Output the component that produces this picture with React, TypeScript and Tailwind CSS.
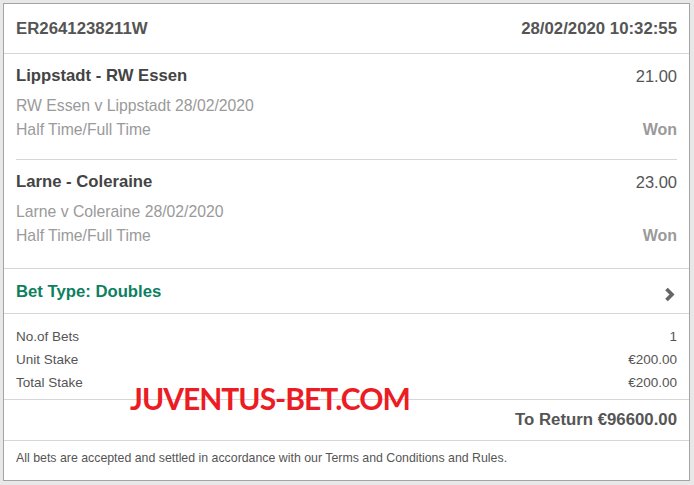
const legs = [
  { title: "Lippstadt - RW Essen", odds: "21.00", event: "RW Essen v Lippstadt 28/02/2020", market: "Half Time/Full Time", result: "Won" },
  { title: "Larne - Coleraine", odds: "23.00", event: "Larne v Coleraine 28/02/2020", market: "Half Time/Full Time", result: "Won" },
];

const summary = [
  ["No.of Bets", "1"],
  ["Unit Stake", "€200.00"],
  ["Total Stake", "€200.00"],
];

function Chevron() {
  return (
    <svg width="12" height="15" viewBox="0 0 12 15" className="mr-[1px] mt-[5px]">
      <polyline points="2.5,2 8,7.5 2.5,13" fill="none" stroke="#666" strokeWidth="3.6" strokeLinejoin="miter" />
    </svg>
  );
}

export default function App() {
  return (
    <div className="min-h-screen bg-[#e8e8e8] p-[3px] font-['Liberation_Sans',Arial,sans-serif]">
      <div className="relative w-[687px] h-[478px] border border-[#a4a4a4] bg-white">
        {/* header */}
        <div className="flex h-[50px] items-center justify-between border-b border-[#d6d6d6] px-3 text-[16.8px] font-bold leading-5 text-[#555]">
          <span>ER2641238211W</span>
          <span>28/02/2020 10:32:55</span>
        </div>

        {/* legs */}
        <div className="border-b border-[#d6d6d6] px-3">
          {legs.map((leg, i) => (
            <div
              key={leg.title}
              className={i === 0 ? "border-b border-[#d6d6d6] pt-3 pb-[17px]" : "pt-3 pb-5"}
            >
              <div className="flex justify-between leading-5">
                <span className="text-[16.7px] font-bold text-[#444]">{leg.title}</span>
                <span className="text-[16.5px] text-[#555]">{leg.odds}</span>
              </div>
              <div className="mt-2 text-[15.75px] leading-6 text-[#9a9a9a]">{leg.event}</div>
              <div className="flex justify-between text-[15.75px] leading-6 text-[#9a9a9a]">
                <span>{leg.market}</span>
                <span className="text-[16px] font-bold">{leg.result}</span>
              </div>
            </div>
          ))}
        </div>

        {/* bet type */}
        <div className="flex h-[45px] items-center justify-between border-b border-[#d6d6d6] px-3 pt-[2px]">
          <span className="text-[16.7px] font-bold leading-5 text-[#0e7f5f]">Bet Type: Doubles</span>
          <Chevron />
        </div>

        {/* stakes */}
        <div className="border-b border-[#d6d6d6] px-3 pt-[11px] pb-[5px] text-[13.5px] leading-[23px] text-[#555]">
          {summary.map(([label, value]) => (
            <div key={label} className="flex justify-between">
              <span>{label}</span>
              <span>{value}</span>
            </div>
          ))}
        </div>

        <div className="flex h-[41px] items-center justify-end border-b border-[#d6d6d6] px-3 text-[16.8px] font-bold leading-5 text-[#555]">
          To Return €96600.00
        </div>

        <div className="px-3 pt-[9px] text-[12.35px] leading-4 text-[#555]">
          All bets are accepted and settled in accordance with our Terms and Conditions and Rules.
        </div>

        {/* watermark */}
        <div className="absolute left-[126px] top-[376px] font-['Lato',sans-serif] text-[30px] font-bold leading-9 tracking-[-1px] text-[#ec1c24]">
          JUVENTUS-BET.COM
        </div>
      </div>
    </div>
  );
}
